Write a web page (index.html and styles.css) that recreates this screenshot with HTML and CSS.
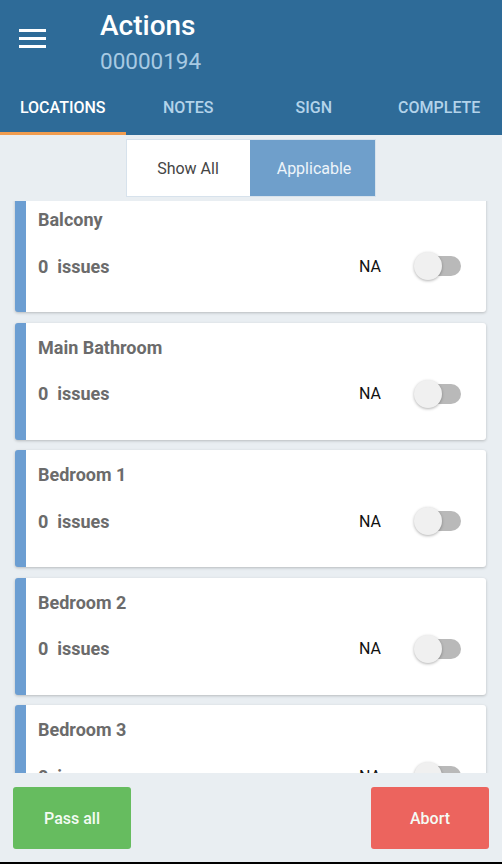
FILE: index.html
```html
<!DOCTYPE html>
<html>
<head>
<meta charset="utf-8">
<link rel="stylesheet" href="styles.css">
</head>
<body>
<div class="app">
  <header class="header">
    <div class="topbar">
      <div class="menu"><span></span><span></span><span></span></div>
      <div class="titles">
        <div class="title">Actions</div>
        <div class="subtitle">00000194</div>
      </div>
    </div>
    <nav class="tabs">
      <div class="tab active">LOCATIONS</div>
      <div class="tab">NOTES</div>
      <div class="tab">SIGN</div>
      <div class="tab">COMPLETE</div>
    </nav>
  </header>
  <div class="segwrap">
    <div class="seg">
      <div class="seg-item">Show All</div>
      <div class="seg-item selected">Applicable</div>
    </div>
  </div>
  <div class="list">
    <div class="list-inner">
      <div class="card">
        <div class="card-title">Balcony</div>
        <div class="card-row"><span class="issues">0&nbsp; issues</span><span class="na">NA</span><span class="switch"><span class="track"></span><span class="thumb"></span></span></div>
      </div>
      <div class="card">
        <div class="card-title">Main Bathroom</div>
        <div class="card-row"><span class="issues">0&nbsp; issues</span><span class="na">NA</span><span class="switch"><span class="track"></span><span class="thumb"></span></span></div>
      </div>
      <div class="card">
        <div class="card-title">Bedroom 1</div>
        <div class="card-row"><span class="issues">0&nbsp; issues</span><span class="na">NA</span><span class="switch"><span class="track"></span><span class="thumb"></span></span></div>
      </div>
      <div class="card">
        <div class="card-title">Bedroom 2</div>
        <div class="card-row"><span class="issues">0&nbsp; issues</span><span class="na">NA</span><span class="switch"><span class="track"></span><span class="thumb"></span></span></div>
      </div>
      <div class="card">
        <div class="card-title">Bedroom 3</div>
        <div class="card-row"><span class="issues">0&nbsp; issues</span><span class="na">NA</span><span class="switch"><span class="track"></span><span class="thumb"></span></span></div>
      </div>
    </div>
  </div>
  <footer class="footer">
    <div class="btn pass">Pass all</div>
    <div class="btn abort">Abort</div>
  </footer>
  <div class="navbar"></div>
</div>
</body>
</html>
```
FILE: styles.css
```css
* { box-sizing: border-box; }
html, body { margin: 0; padding: 0; }
body {
  font-family: Roboto, "Noto Sans", "Liberation Sans", sans-serif;
  background: #e9eef2;
}
.app {
  width: 502px;
  height: 864px;
  display: flex;
  flex-direction: column;
  overflow: hidden;
}
.header {
  background: #2e6b98;
  height: 135px;
  flex: none;
}
.topbar {
  height: 86px;
  display: flex;
  align-items: flex-start;
}
.menu {
  width: 27px;
  margin: 29px 0 0 19px;
  display: flex;
  flex-direction: column;
  gap: 5px;
}
.menu span {
  display: block;
  height: 3px;
  background: #ffffff;
}
.titles {
  margin-left: 54px;
  padding-top: 10px;
}
.title {
  color: #ffffff;
  font-size: 28px;
  line-height: 32px;
  font-weight: 500;
}
.subtitle {
  margin-top: 6px;
  color: #a8cae3;
  font-size: 22.5px;
  line-height: 26px;
}
.tabs {
  display: flex;
  height: 49px;
}
.tab {
  flex: 1;
  text-align: center;
  padding-top: 11px;
  font-size: 16px;
  line-height: 21px;
  font-weight: 500;
  color: #b3d3ea;
  border-bottom: 3px solid transparent;
}
.tab.active {
  color: #ffffff;
  border-bottom-color: #f09c4f;
}
.segwrap {
  flex: none;
  height: 66px;
  padding-top: 4px;
  display: flex;
  justify-content: center;
}
.seg {
  display: flex;
  height: 58px;
  width: 250px;
  border: 1px solid #d7e2ec;
  background: #ffffff;
}
.seg-item {
  width: 122px;
  display: flex;
  align-items: center;
  justify-content: center;
  font-size: 16px;
  color: #454545;
}
.seg-item.selected {
  flex: 1;
  background: #6f9fcb;
  color: #eef4fa;
  margin-left: 1px;
  padding-left: 3px;
}
.list {
  flex: 1;
  overflow: hidden;
  padding: 0 16px 0 15px;
}
.list-inner {
  margin-top: -6px;
  display: flex;
  flex-direction: column;
  gap: 10.6px;
}
.card {
  flex: none;
  height: 117px;
  background: #ffffff;
  border-left: 11px solid #6c9ed2;
  border-radius: 3px;
  box-shadow: 0 1px 3px rgba(0,0,0,0.22);
  padding: 15px 25px 0 12px;
}
.card-title {
  font-size: 18px;
  line-height: 20px;
  font-weight: 700;
  color: #6b6b6b;
}
.card-row {
  margin-top: 22px;
  height: 28px;
  display: flex;
  align-items: center;
}
.issues {
  flex: 1;
  font-size: 18px;
  font-weight: 700;
  color: #6b6b6b;
}
.na {
  font-size: 16px;
  color: #111111;
  margin-right: 33px;
}
.switch {
  position: relative;
  width: 47px;
  height: 28px;
}
.track {
  position: absolute;
  right: 0;
  top: 4px;
  width: 44px;
  height: 20px;
  border-radius: 10px;
  background: #b9b9b9;
}
.thumb {
  position: absolute;
  left: 0;
  top: 0;
  width: 28px;
  height: 28px;
  border-radius: 50%;
  background: #f0f0f0;
  box-shadow: 0 1px 3px rgba(0,0,0,0.3);
}
.footer {
  flex: none;
  height: 89px;
  padding: 14px 13px 13px 13px;
  display: flex;
  justify-content: space-between;
  background: #e9eef2;
}
.btn {
  width: 118px;
  height: 62px;
  border-radius: 3px;
  display: flex;
  align-items: center;
  justify-content: center;
  font-size: 16px;
  font-weight: 500;
  color: #f4fbf4;
}
.pass { background: #66bc5f; }
.abort { background: #ec645e; }
.navbar {
  flex: none;
  height: 2px;
  background: #000000;
}
```
